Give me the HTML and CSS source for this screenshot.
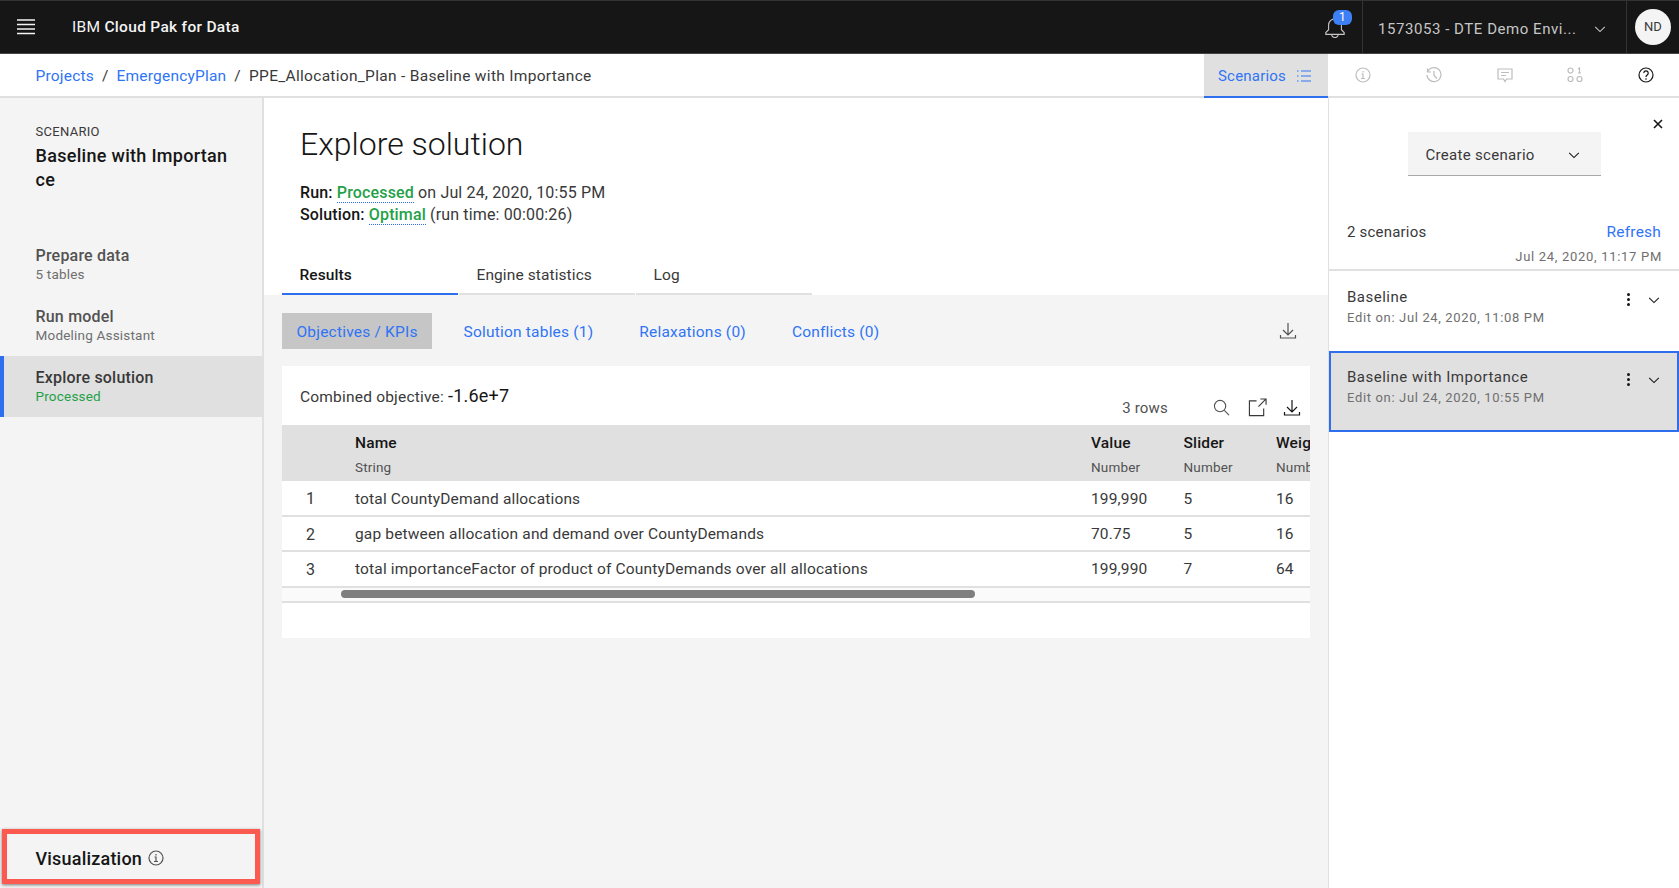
FILE: index.html
```html
<!DOCTYPE html>
<html>
<head>
  <link rel="stylesheet" href="styles.css">
</head>
<body>
  <header class="topbar">
    <svg class="icon menu-icon" viewBox="0 0 20 20"><path d="M1 3h18M1 7.500h18M1 12h18M1 16.500h18"/></svg>
    <div class="brand">IBM <b>Cloud Pak for Data</b></div>
    <div class="bell">
      <svg class="icon bell-icon" viewBox="0 0 24 24"><path d="M12 3a7 7 0 0 0-7 7v5l-3 3v2h20v-2l-3-3v-5a7 7 0 0 0-7-7zM8.500 20a3.500 3.500 0 0 0 7 0"/></svg>
      <span class="badge">1</span>
    </div>
    <div class="account">
      <span>1573053 - DTE Demo Envi...</span>
      <svg class="icon chev" viewBox="0 0 16 16"><path d="M2.500 5.500 8 11l5.500-5.500"/></svg>
    </div>
    <div class="avatar-box"><div class="avatar">ND</div></div>
  </header>

  <nav class="subbar">
    <div class="crumbs">
      <a>Projects</a><span class="sep">/</span><a>EmergencyPlan</a><span class="sep">/</span><span class="crumb-current">PPE_Allocation_Plan - Baseline with Importance</span>
    </div>
    <div class="tools">
      <div class="scenarios-tab">
        <span>Scenarios</span>
        <svg class="icon list-icon" viewBox="0 0 16 16"><path d="M5 3h10M5 8h10M5 13h10M1 3h1.500M1 8h1.500M1 13h1.500"/></svg>
      </div>
      <div class="tool"><svg class="icon faint" viewBox="0 0 16 16"><circle cx="8" cy="8" r="7"/><path d="M6.500 7H8v4.500M6 11.500h4M8 4v1.500"/></svg></div>
      <div class="tool"><svg class="icon faint" viewBox="0 0 16 16"><path d="M1.500 1.500v3.500H5M1.500 5A7 7 0 1 1 1 8M8 4v4.500l3 3"/></svg></div>
      <div class="tool"><svg class="icon faint" viewBox="0 0 16 16"><path d="M1 2h14v10H9.500L8 14.500 6.500 12H1zM4 5.500h8M4 8.500h5"/></svg></div>
      <div class="tool"><svg class="icon faint" viewBox="0 0 16 16"><circle cx="3.500" cy="3.500" r="2.500"/><circle cx="3.500" cy="12" r="2.500"/><circle cx="12.500" cy="12" r="2.500"/><path d="M11 2l1.500-1v5M11 6h3"/></svg></div>
      <div class="tool"><svg class="icon dark" viewBox="0 0 16 16"><circle cx="8" cy="8" r="7"/><path d="M5.800 6a2.200 2.200 0 1 1 3.400 1.900C8.400 8.400 8 8.900 8 10M8 11.300v1.500"/></svg></div>
    </div>
  </nav>

  <div class="layout">
    <aside class="sidebar">
      <div class="scenario-head">
        <div class="eyebrow">SCENARIO</div>
        <div class="scenario-name">Baseline with Importance</div>
      </div>
      <div class="steps">
        <div class="step"><div class="step-title">Prepare data</div><div class="step-sub">5 tables</div></div>
        <div class="step"><div class="step-title">Run model</div><div class="step-sub">Modeling Assistant</div></div>
        <div class="step active"><div class="step-title">Explore solution</div><div class="step-sub ok">Processed</div></div>
      </div>
      <div class="viz">
        <span>Visualization</span>
        <svg class="icon info-small" viewBox="0 0 16 16"><circle cx="8" cy="8" r="7"/><path d="M6.500 7H8v4.500M6 11.500h4M8 4v1.500"/></svg>
      </div>
    </aside>

    <main class="main">
      <div class="intro">
        <h1>Explore solution</h1>
        <p><b>Run:</b> <span class="status">Processed</span> on Jul 24, 2020, 10:55 PM</p>
        <p><b>Solution:</b> <span class="status">Optimal</span> (run time: 00:00:26)</p>
        <div class="tabs">
          <div class="tab selected">Results</div>
          <div class="tab">Engine statistics</div>
          <div class="tab">Log</div>
        </div>
      </div>

      <div class="content">
        <div class="subtabs">
          <a class="subtab current">Objectives / KPIs</a>
          <a class="subtab">Solution tables (1)</a>
          <a class="subtab">Relaxations (0)</a>
          <a class="subtab">Conflicts (0)</a>
          <svg class="icon download" viewBox="0 0 18 18"><path d="M9 1v11.500M4 8l5 5 5-5M1.500 13v3h15v-3"/></svg>
        </div>

        <section class="card">
          <div class="card-head">
            <div class="objective">Combined objective: <span>-1.6e+7</span></div>
            <div class="card-tools">
              <span class="rows">3 rows</span>
              <svg class="icon search" viewBox="0 0 18 18"><circle cx="7.500" cy="7.500" r="6"/><path d="M12 12l5 5"/></svg>
              <svg class="icon popout" viewBox="0 0 20 20"><path d="M9 3H1.500v15.500h15V11M11 9l8-8M13 1h6v6"/></svg>
              <svg class="icon download dark-dl" viewBox="0 0 18 18"><path d="M9 1v11.500M4 8l5 5 5-5M1.500 13v3h15v-3"/></svg>
            </div>
          </div>

          <div class="table-wrap">
            <table class="grid">
              <thead>
                <tr>
                  <th class="num"></th>
                  <th class="name">Name<small>String</small></th>
                  <th class="value">Value<small>Number</small></th>
                  <th class="slider">Slider<small>Number</small></th>
                  <th class="weight">Weight<small>Number</small></th>
                </tr>
              </thead>
              <tbody>
                <tr><td class="num">1</td><td>total CountyDemand allocations</td><td>199,990</td><td>5</td><td>16</td></tr>
                <tr><td class="num">2</td><td>gap between allocation and demand over CountyDemands</td><td>70.75</td><td>5</td><td>16</td></tr>
                <tr><td class="num">3</td><td>total importanceFactor of product of CountyDemands over all allocations</td><td>199,990</td><td>7</td><td>64</td></tr>
              </tbody>
            </table>
            <div class="scroll-row"><div class="scroll-thumb"></div></div>
          </div>
        </section>
      </div>
    </main>

    <aside class="panel">
      <div class="panel-close">
        <svg class="icon close" viewBox="0 0 10 10"><path d="M1 1l8 8M9 1l-8 8"/></svg>
      </div>
      <div class="create-row">
        <div class="create-btn">
          <span>Create scenario</span>
          <svg class="icon chev dark" viewBox="0 0 16 16"><path d="M2.500 5.500 8 11l5.500-5.500"/></svg>
        </div>
      </div>
      <div class="count-row">
        <span>2 scenarios</span>
        <a>Refresh</a>
      </div>
      <div class="stamp">Jul 24, 2020, 11:17 PM</div>

      <div class="scenario">
        <div class="scenario-text">
          <div class="scenario-title">Baseline</div>
          <div class="scenario-date">Edit on: Jul 24, 2020, 11:08 PM</div>
        </div>
        <span class="kebab"><i></i><i></i><i></i></span>
        <svg class="icon chev dark" viewBox="0 0 16 16"><path d="M2.500 5.500 8 11l5.500-5.500"/></svg>
      </div>
      <div class="scenario picked">
        <div class="scenario-text">
          <div class="scenario-title">Baseline with Importance</div>
          <div class="scenario-date">Edit on: Jul 24, 2020, 10:55 PM</div>
        </div>
        <span class="kebab"><i></i><i></i><i></i></span>
        <svg class="icon chev dark" viewBox="0 0 16 16"><path d="M2.500 5.500 8 11l5.500-5.500"/></svg>
      </div>
    </aside>
  </div>
</body>
</html>
```

FILE: styles.css
```css
:root {
  --blue: #2f6fed;
  --link: #2f74f6;
  --ink: #161616;
  --text: #393939;
  --muted: #6f6f6f;
  --line: #e0e0e0;
  --panel: #f4f4f4;
  --green: #24a148;
  --font: Roboto, "Liberation Sans", sans-serif;
}

* {
  box-sizing: border-box;
}

html, body {
  margin: 0;
  padding: 0;
  height: 100%;
  overflow: hidden;
  background: #fff;
  color: var(--ink);
  font-family: var(--font);
  font-size: 15px;
  letter-spacing: 0.2px;
}

.icon {
  display: block;
  flex: none;
  fill: none;
  stroke: currentColor;
  stroke-width: 1.2;
}

/* top bar */
.topbar {
  display: flex;
  align-items: center;
  height: 54px;
  background: #161616;
  border-top: 1px solid #333;
  border-bottom: 1px solid #444;
  color: #f4f4f4;
}

.menu-icon {
  width: 20px;
  height: 20px;
  margin-left: 16px;
  stroke-width: 1.3;
}

.brand {
  flex: 1;
  margin-left: 36px;
  font-size: 15.500px;
  letter-spacing: 0.3px;
}

.brand b {
  font-weight: 500;
}

.bell {
  position: relative;
  width: 22px;
  height: 22px;
  margin-right: 16px;
  color: #c6c6c6;
}

.bell-icon {
  width: 22px;
  height: 22px;
}

.badge {
  position: absolute;
  top: -6px;
  left: 9px;
  width: 19px;
  height: 15px;
  border-radius: 6px;
  background: #3d7ff5;
  color: #fff;
  font-size: 12px;
  line-height: 15px;
  text-align: center;
}

.account {
  display: flex;
  align-items: center;
  justify-content: space-between;
  width: 265px;
  height: 100%;
  padding: 3px 19px 0 15px;
  border-left: 1px solid #333;
  border-right: 1px solid #333;
  color: #c6c6c6;
  font-size: 15px;
  letter-spacing: 0.55px;
}

.account .chev {
  width: 14px;
  height: 14px;
}

.avatar-box {
  display: flex;
  align-items: center;
  justify-content: center;
  flex: none;
  width: 52px;
}

.avatar {
  width: 36px;
  height: 36px;
  border-radius: 50%;
  background: #f4f4f4;
  color: #393939;
  font-size: 13px;
  line-height: 36px;
  text-align: center;
}

/* breadcrumb row */
.subbar {
  display: flex;
  justify-content: space-between;
  height: 44px;
  border-bottom: 2px solid var(--line);
}

.crumbs {
  display: flex;
  align-items: center;
  padding: 2px 0 0 35.500px;
  font-size: 15.500px;
  color: var(--text);
}

.crumbs a {
  color: var(--link);
}

.sep {
  margin: 0 8px;
}

.crumb-current {
  letter-spacing: 0.3px;
}

.tools {
  display: flex;
  flex: none;
  width: 475px;
}

.scenarios-tab {
  display: flex;
  align-items: center;
  justify-content: space-between;
  flex: none;
  width: 124px;
  height: 44px;
  padding: 2px 16px 0 14px;
  background: var(--line);
  border-bottom: 2px solid var(--blue);
  color: var(--link);
  font-size: 15px;
}

.list-icon {
  width: 16px;
  height: 16px;
}

.tool {
  display: flex;
  align-items: center;
  justify-content: center;
  flex: none;
  width: 70.700px;
}

.tool:last-child {
  width: 68.200px;
  padding-left: 27.400px;
  justify-content: flex-start;
}

.tool .icon {
  width: 16px;
  height: 16px;
}

.faint {
  color: #bdbdbd;
}

.dark {
  color: var(--ink);
}

/* columns */
.layout {
  display: flex;
  height: calc(100vh - 98px);
}

.sidebar {
  display: flex;
  flex-direction: column;
  flex: none;
  width: 264px;
  background: var(--panel);
  border-right: 2px solid var(--line);
}

.scenario-head {
  height: 136px;
  padding: 26px 20px 0 35.500px;
}

.eyebrow {
  font-size: 13px;
  color: var(--text);
  letter-spacing: 0.3px;
}

.scenario-name {
  width: 197px;
  margin-top: 5px;
  font-size: 18px;
  font-weight: 500;
  line-height: 24px;
  letter-spacing: 0.3px;
  word-break: break-all;
}

.steps {
  flex: 1;
}

.step {
  height: 61px;
  padding: 12px 35.500px 0;
}

.step-title {
  font-size: 16px;
  font-weight: 500;
  color: #525252;
}

.step-sub {
  margin-top: 1px;
  font-size: 13.500px;
  color: var(--muted);
}

.step.active {
  padding-left: 31.500px;
  background: var(--line);
  border-left: 4px solid var(--blue);
}

.step.active .step-title {
  color: var(--text);
}

.ok {
  color: var(--green);
}

.viz {
  display: flex;
  align-items: center;
  gap: 6px;
  height: 55px;
  margin: 0 2px 4px 2px;
  padding: 3px 0 0 28.500px;
  border: 5px solid #fa5a50;
  box-shadow: 0 1px 3px rgba(0, 0, 0, 0.5);
  font-size: 18px;
  font-weight: 500;
}

.info-small {
  width: 16px;
  height: 16px;
  color: #525252;
}

/* main column */
.main {
  display: flex;
  flex-direction: column;
  flex: 1;
  min-width: 0;
}

.intro {
  padding: 26px 0 0 18px;
}

.intro h1 {
  margin: 0 0 18px 18px;
  font-size: 32px;
  font-weight: 300;
  line-height: 40px;
  color: var(--ink);
  letter-spacing: 0;
}

.intro p {
  margin: 0 0 0 18px;
  font-size: 16px;
  line-height: 22px;
  letter-spacing: 0.15px;
  color: var(--text);
}

.intro b {
  font-weight: 500;
  color: var(--ink);
}

.status {
  color: var(--green);
  font-weight: 500;
  border-bottom: 1px dotted var(--blue);
}

.tabs {
  display: flex;
  gap: 1.500px;
  margin-top: 37px;
}

.tab {
  width: 175.500px;
  height: 32px;
  padding-left: 17.500px;
  border-bottom: 2px solid var(--line);
  color: var(--text);
  font-size: 15.500px;
  line-height: 24px;
  letter-spacing: 0.1px;
}

.tab.selected {
  border-bottom-color: var(--blue);
  color: var(--ink);
  font-weight: 500;
}

.content {
  flex: 1;
  padding: 18px 18px 0;
  background: var(--panel);
}

.subtabs {
  display: flex;
  align-items: center;
  height: 36px;
  color: var(--link);
  font-size: 15.500px;
}

.subtab {
  margin-right: 46px;
  padding-top: 1px;
}

.subtab.current {
  height: 36px;
  margin-right: 31.500px;
  padding: 1px 14.500px 0;
  background: #c6c6c6;
  line-height: 36px;
}

.download {
  width: 18px;
  height: 18px;
  margin-left: auto;
  margin-right: 13px;
  color: #525252;
}

.card {
  height: 272px;
  margin-top: 17px;
  background: #fff;
}

.card-head {
  position: relative;
  height: 59px;
}

.objective {
  padding: 19px 0 0 18px;
  font-size: 15.500px;
  color: var(--text);
}

.objective span {
  font-size: 18px;
  color: var(--ink);
}

.card-tools {
  position: absolute;
  right: 9px;
  bottom: 8px;
  display: flex;
  align-items: center;
  color: var(--text);
}

.rows {
  margin-right: 45px;
  font-size: 15px;
  color: #525252;
}

.search {
  width: 17px;
  height: 17px;
  margin-right: 18px;
  color: #525252;
}

.popout {
  width: 19px;
  height: 19px;
  margin-right: 16px;
}

.dark-dl {
  margin: 0;
  color: var(--ink);
}

.table-wrap {
  overflow: hidden;
}

.grid {
  width: 1060px;
  border-collapse: collapse;
  table-layout: fixed;
  font-size: 15.500px;
  letter-spacing: 0.16px;
  color: var(--text);
}

.grid thead tr {
  height: 56px;
  background: var(--line);
}

.grid th {
  padding: 9px 0 0;
  vertical-align: top;
  text-align: left;
  font-size: 15.500px;
  font-weight: 500;
  color: var(--ink);
  white-space: nowrap;
  overflow: hidden;
}

.grid th small {
  display: block;
  margin-top: 7px;
  font-size: 13.500px;
  font-weight: 400;
  color: #525252;
}

.grid td {
  height: 35.200px;
  padding: 1px 0 0;
  border-bottom: 2px solid var(--line);
}

th.num {
  width: 73px;
}

th.name {
  width: 736px;
}

th.value,
th.slider {
  width: 92.500px;
}

td.num {
  padding-right: 16px !important;
  text-align: center;
  font-size: 16px;
}

.scroll-row {
  display: flex;
  align-items: center;
  height: 15px;
  padding-left: 59px;
  background: #fafafa;
  border-bottom: 2px solid var(--line);
}

.scroll-thumb {
  width: 634px;
  height: 8px;
  border-radius: 4px;
  background: #7f7f7f;
}

/* right panel */
.panel {
  flex: none;
  width: 351px;
  border-left: 1px solid var(--line);
}

.panel-close {
  display: flex;
  justify-content: flex-end;
  padding: 21px 16px 0 0;
}

.close {
  width: 10px;
  height: 10px;
  stroke-width: 1.6;
  color: var(--ink);
}

.create-row {
  display: flex;
  justify-content: center;
  margin-top: 3px;
}

.create-btn {
  display: flex;
  align-items: center;
  justify-content: space-between;
  width: 193px;
  height: 44px;
  padding: 2px 20px 0 18px;
  background: var(--panel);
  border-bottom: 1px solid #a8a8a8;
  color: var(--text);
  font-size: 15px;
  letter-spacing: 0.3px;
}

.create-btn .chev {
  width: 14px;
  height: 14px;
}

.count-row {
  display: flex;
  justify-content: space-between;
  align-items: baseline;
  margin-top: 47px;
  padding: 0 18px;
  font-size: 15px;
  color: var(--text);
}

.count-row a {
  color: var(--link);
  font-size: 15.500px;
}

.stamp {
  padding: 8px 17px 5px 0;
  border-bottom: 2px solid var(--line);
  text-align: right;
  font-size: 13px;
  color: var(--muted);
  letter-spacing: 0.7px;
}

.scenario {
  display: flex;
  align-items: flex-start;
  height: 80px;
  padding: 17px 18.500px 0 18px;
}

.scenario-text {
  flex: 1;
}

.scenario-title {
  font-size: 15px;
  color: var(--text);
  letter-spacing: 0.5px;
}

.scenario-date {
  margin-top: 4px;
  font-size: 13px;
  color: var(--muted);
  letter-spacing: 0.65px;
}

.kebab {
  display: flex;
  flex-direction: column;
  gap: 2px;
  margin: 5px 16.500px 0 0;
}

.kebab i {
  width: 3px;
  height: 3px;
  border-radius: 50%;
  background: var(--ink);
}

.scenario .chev {
  width: 14px;
  height: 14px;
  margin-top: 5px;
}

.scenario.picked {
  height: 81px;
  padding: 15px 16.500px 0 16px;
  background: var(--line);
  border: 2px solid var(--blue);
}
```
